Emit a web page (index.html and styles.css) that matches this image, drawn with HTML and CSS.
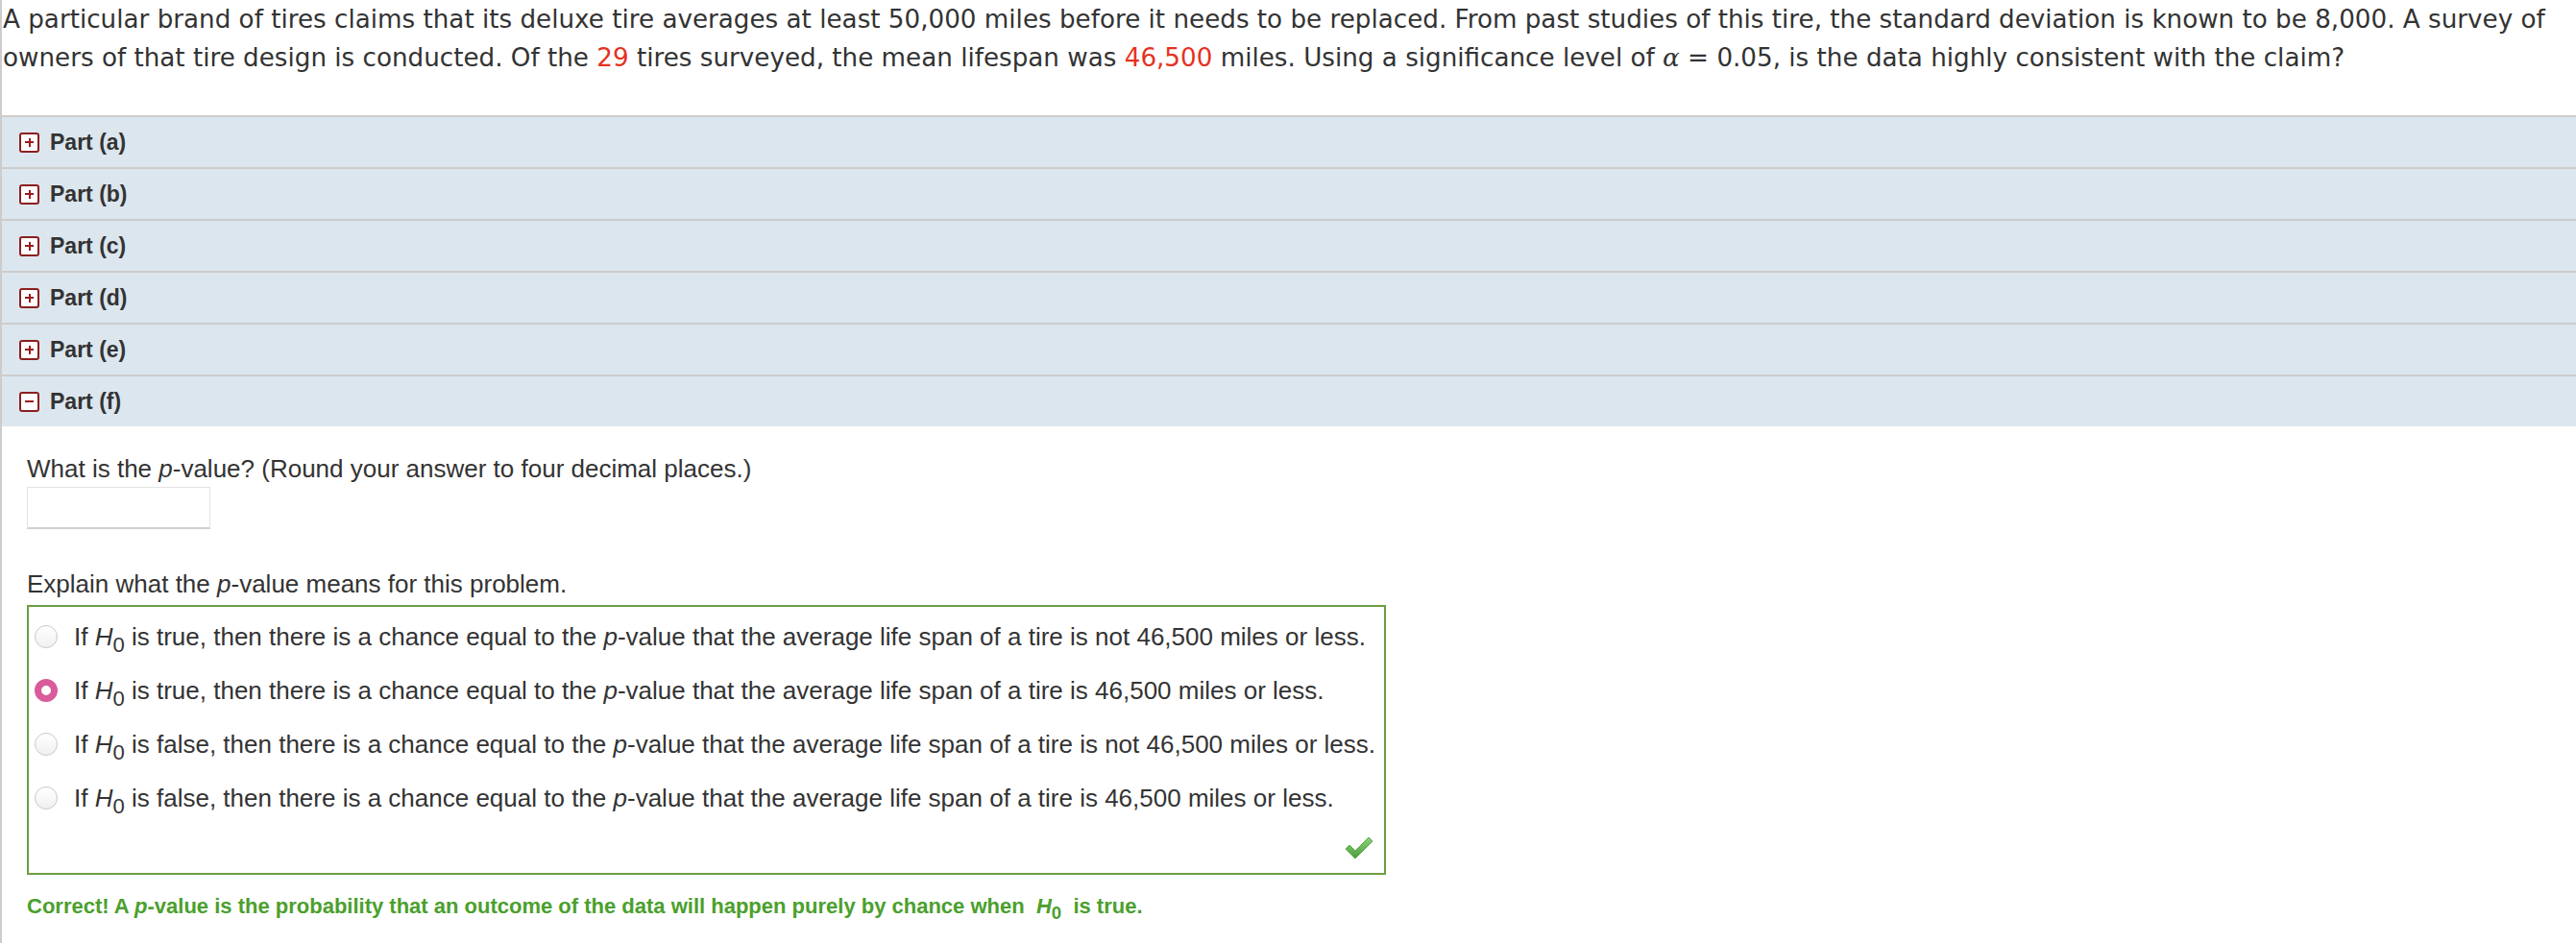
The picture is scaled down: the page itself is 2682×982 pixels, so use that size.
FILE: index.html
```html
<!DOCTYPE html>
<html lang="en">
<head>
    <meta charset="UTF-8">
    <title>Part (f)</title>
    <link rel="stylesheet" href="styles.css">
</head>
<body>
<div class="page">
    <div class="question">
        A particular brand of tires claims that its deluxe tire averages at least 50,000 miles before it needs to be replaced. From past studies of this tire, the standard deviation is known to be 8,000. A survey of owners of that tire design is conducted. Of the <span class="num">29</span> tires surveyed, the mean lifespan was <span class="num">46,500</span> miles. Using a significance level of <i class="alpha">&alpha;</i> = 0.05, is the data highly consistent with the claim?
    </div>

    <div class="part"><span class="toggle plus"></span>Part (a)</div>
    <div class="part"><span class="toggle plus"></span>Part (b)</div>
    <div class="part"><span class="toggle plus"></span>Part (c)</div>
    <div class="part"><span class="toggle plus"></span>Part (d)</div>
    <div class="part"><span class="toggle plus"></span>Part (e)</div>
    <div class="part"><span class="toggle minus"></span>Part (f)</div>

    <div class="part-body">
        <p class="prompt">What is the <i>p</i>-value? (Round your answer to four decimal places.)</p>
        <input type="text" class="answer-box">

        <p class="prompt explain">Explain what the <i>p</i>-value means for this problem.</p>
        <div class="choices">
            <label class="choice"><span class="radio"></span><span class="choice-text">If <i>H</i><sub>0</sub> is true, then there is a chance equal to the <i>p</i>-value that the average life span of a tire is not 46,500 miles or less.</span></label>
            <label class="choice"><span class="radio checked"></span><span class="choice-text">If <i>H</i><sub>0</sub> is true, then there is a chance equal to the <i>p</i>-value that the average life span of a tire is 46,500 miles or less.</span></label>
            <label class="choice"><span class="radio"></span><span class="choice-text">If <i>H</i><sub>0</sub> is false, then there is a chance equal to the <i>p</i>-value that the average life span of a tire is not 46,500 miles or less.</span></label>
            <label class="choice"><span class="radio"></span><span class="choice-text">If <i>H</i><sub>0</sub> is false, then there is a chance equal to the <i>p</i>-value that the average life span of a tire is 46,500 miles or less.</span></label>
            <div class="mark">
                <svg width="32" height="27" viewBox="0 0 32 27">
                    <defs>
                        <linearGradient id="chk" x1="0" y1="0" x2="0" y2="1">
                            <stop offset="0" stop-color="#8fd07a"/>
                            <stop offset="1" stop-color="#4a9e3c"/>
                        </linearGradient>
                    </defs>
                    <path d="M2 15 L6 11 L12 17 L26 3 L30 7 L12 25 Z" fill="url(#chk)" stroke="#5aa84a" stroke-width="1" stroke-linejoin="round"/>
                </svg>
            </div>
        </div>

        <p class="feedback">Correct! A <i>p</i>-value is the probability that an outcome of the data will happen purely by chance when&nbsp; <i>H</i><sub>0</sub>&nbsp; is true.</p>
    </div>
</div>
</body>
</html>
```

FILE: styles.css
```css
body {
    margin: 0;
    padding: 0;
    background-color: #fff;
}
.page {
    border-left: 2px solid #cccccc;
    min-height: 100vh;
    box-sizing: border-box;
}
.question {
    font-family: "DejaVu Sans", Verdana, sans-serif;
    font-size: 26.2px;
    line-height: 40px;
    color: #333;
    padding: 0 0 40px 1px;
}
.num {
    color: #e6321e;
}
.alpha {
    font-family: "DejaVu Serif", serif;
}
.part {
    display: flex;
    align-items: center;
    height: 52px;
    border-top: 2px solid #cccccc;
    background-color: #dce6ee;
    font-family: "Liberation Sans", Arial, sans-serif;
    font-weight: bold;
    font-size: 23px;
    color: #333;
    padding-left: 18px;
}
.toggle {
    position: relative;
    width: 17px;
    height: 17px;
    border: 2px solid #8b1f1f;
    border-radius: 3px;
    background-color: #fff;
    margin-right: 11px;
}
.toggle:before,
.toggle:after {
    content: "";
    position: absolute;
    background-color: #9b1c1c;
}
.toggle:before {
    left: 4px;
    top: 7.5px;
    width: 9px;
    height: 2px;
}
.plus:after {
    left: 7.5px;
    top: 4px;
    width: 2px;
    height: 9px;
}
.part-body {
    padding: 27px 0 0 26px;
    font-family: "Liberation Sans", Arial, sans-serif;
    color: #333;
}
.prompt {
    font-size: 26px;
    line-height: 34px;
    margin: 0 0 2px 0;
}
.answer-box {
    display: block;
    width: 191px;
    height: 44px;
    box-sizing: border-box;
    border: 1px solid #e2e2e2;
    border-bottom: 2px solid #d0d0d0;
    margin: 0;
    padding: 0;
}
.explain {
    margin-top: 40px;
    margin-bottom: 5px;
}
.choices {
    display: flex;
    flex-direction: column;
    width: 1415px;
    height: 281px;
    box-sizing: border-box;
    border: 2px solid #6b9e43;
    padding: 3px 0 0 6px;
}
.choice {
    display: flex;
    align-items: center;
    height: 56px;
    font-size: 26px;
    color: #333;
}
.choice-text {
    white-space: nowrap;
    line-height: 30px;
}
sub {
    font-size: 0.85em;
    vertical-align: -0.3em;
    line-height: 0;
}
.radio {
    width: 22px;
    height: 22px;
    border: 1px solid #c9c9c9;
    border-radius: 50%;
    background: linear-gradient(#ffffff, #f0f0f0);
    margin-right: 17px;
    flex-shrink: 0;
}
.radio.checked {
    width: 10px;
    height: 10px;
    border: 7px solid #d95b9b;
    background: #fff;
}
.mark {
    display: flex;
    justify-content: flex-end;
    margin-top: auto;
    padding: 0 10px 13px 0;
}
.feedback {
    font-size: 22px;
    font-weight: bold;
    color: #4aa02c;
    margin: 20px 0 0 0;
}
```
